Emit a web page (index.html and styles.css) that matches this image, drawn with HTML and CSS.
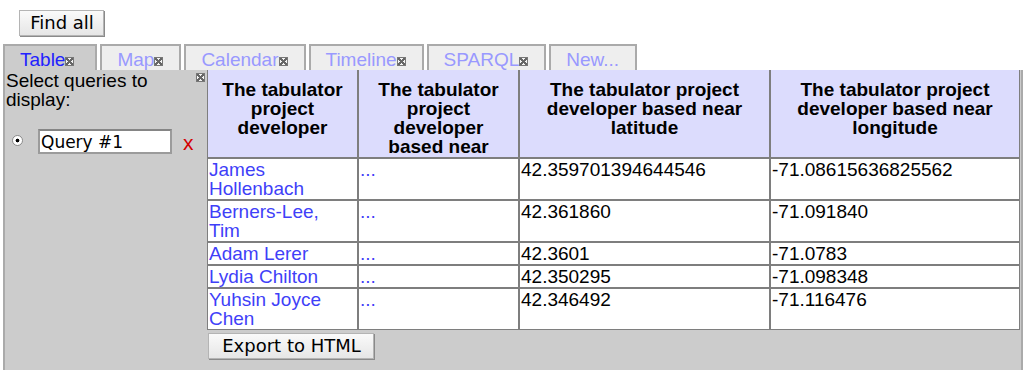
FILE: index.html
```html
<!DOCTYPE html>
<html lang="en">
<head>
  <meta charset="UTF-8">
  <meta name="viewport" content="width=device-width, initial-scale=1.0">
  <title>Tabulator</title>
  <link rel="stylesheet" href="styles.css">
</head>
<body>
  <div class="toolbar">
    <button class="btn">Find all</button>
  </div>
  <div class="tabs">
    <div class="tab active">Table<span class="close"></span></div>
    <div class="tab">Map<span class="close"></span></div>
    <div class="tab">Calendar<span class="close"></span></div>
    <div class="tab">Timeline<span class="close"></span></div>
    <div class="tab">SPARQL<span class="close"></span></div>
    <div class="tab">New...</div>
  </div>
  <div class="panel">
    <div class="sidebar">
      <span class="close close-side"></span>
      <div class="side-title">Select queries to display:</div>
      <div class="query-row">
        <input class="radio" type="radio" name="q" checked>
        <input class="query-name" type="text" value="Query #1">
        <span class="remove">x</span>
      </div>
    </div>
    <div class="results">
      <table class="grid">
        <tr>
          <th class="c1">The tabulator project developer</th>
          <th class="c2">The tabulator project developer based near</th>
          <th class="c3">The tabulator project developer based near latitude</th>
          <th class="c4">The tabulator project developer based near longitude</th>
        </tr>
        <tr>
          <td><a href="#">James Hollenbach</a></td>
          <td><a href="#">...</a></td>
          <td>42.359701394644546</td>
          <td>-71.08615636825562</td>
        </tr>
        <tr>
          <td><a href="#">Berners-Lee, Tim</a></td>
          <td><a href="#">...</a></td>
          <td>42.361860</td>
          <td>-71.091840</td>
        </tr>
        <tr>
          <td><a href="#">Adam Lerer</a></td>
          <td><a href="#">...</a></td>
          <td>42.3601</td>
          <td>-71.0783</td>
        </tr>
        <tr>
          <td><a href="#">Lydia Chilton</a></td>
          <td><a href="#">...</a></td>
          <td>42.350295</td>
          <td>-71.098348</td>
        </tr>
        <tr>
          <td><a href="#">Yuhsin Joyce Chen</a></td>
          <td><a href="#">...</a></td>
          <td>42.346492</td>
          <td>-71.116476</td>
        </tr>
      </table>
      <button class="btn btn-export">Export to HTML</button>
    </div>
  </div>
</body>
</html>
```

FILE: styles.css
```css
*{
  margin: 0;
  padding: 0;
  box-sizing: border-box;
}
body{
  font-family: "Liberation Sans", Arial, sans-serif;
  font-size: 19px;
  line-height: 19px;
  color: #000;
  background: #fff;
  overflow: hidden;
}
.btn{
  font-family: "DejaVu Sans", sans-serif;
  font-size: 18px;
  line-height: 20px;
  color: #000;
  background: linear-gradient(#fafafa, #e6e6e6);
  border: 1px solid #b4b4b4;
  box-shadow: 1px 1px 0 #8a8a8a;
  padding: 2px 8px 2px 9px;
}
.toolbar{
  padding: 10px 0 0 19px;
  height: 44px;
}
.toolbar .btn{
  height: 26px;
  width: 85px;
}
.tabs{
  display: flex;
  gap: 3px;
  margin-left: 3px;
}
.tab{
  height: 26px;
  padding: 4px 16px 1px 15px;
  border: 2px solid #aaa;
  border-bottom: none;
  background: #eee;
  color: #9999ff;
  white-space: nowrap;
}
.tab.active{
  background: #ccc;
  color: #2222ff;
  padding: 4px 21px 1px 15px;
}
.close{
  display: inline-block;
  width: 9px;
  height: 9px;
  border: 1px solid #777;
  background:
    linear-gradient(45deg, transparent 42%, #666 42%, #666 58%, transparent 58%),
    linear-gradient(-45deg, transparent 42%, #666 42%, #666 58%, transparent 58%),
    #f4f4f4;
  vertical-align: baseline;
}
.panel{
  display: flex;
  width: 1020px;
  min-height: 300px;
  margin-left: 3px;
  background: #ccc;
  border-left: 2px solid #aaa;
  border-right: 2px solid #aaa;
}
.sidebar{
  width: 202px;
  padding: 1px 2px 0 1px;
}
.close-side{
  float: right;
  margin-top: 2px;
}
.query-row{
  display: flex;
  align-items: center;
  margin-top: 20px;
  height: 25px;
}
.radio{
  appearance: none;
  width: 11px;
  height: 11px;
  margin: 0 15px 2px 6px;
  border-radius: 50%;
  border: 1px solid #8c8c8c;
  background: radial-gradient(circle, #000 0, #000 1.6px, #fff 2.2px);
}
.query-name{
  width: 134px;
  height: 25px;
  border: 2px solid #9b9b9b;
  border-top-color: #858585;
  background: #fff;
  font-family: "DejaVu Sans", sans-serif;
  font-size: 17px;
  padding: 0 1px;
  color: #000;
  outline: none;
}
.remove{
  margin-left: 11px;
  color: #d40000;
  font-size: 21px;
  line-height: 21px;
  margin-top: 1px;
}
.results{
  flex: 1;
  padding-right: 1px;
}
.grid{
  width: 813px;
  border-spacing: 0;
  table-layout: fixed;
}
.grid th,
.grid td{
  border: 1px solid #7e7e7e;
  vertical-align: top;
  text-align: left;
  padding: 1px 4px 1px 1px;
  background: #fff;
}
.grid th{
  border-top: none;
  background: #dcdcfd;
  text-align: center;
  font-weight: bold;
  padding: 10px 7px 1px;
}
.grid .c1{
  width: 151px;
}
.grid .c2{
  width: 161px;
}
.grid .c3{
  width: 251px;
}
.grid a{
  color: #3f3ff8;
  text-decoration: none;
}
.btn-export{
  margin: 3px 0 0 1px;
  height: 26px;
  width: 166px;
}
```
